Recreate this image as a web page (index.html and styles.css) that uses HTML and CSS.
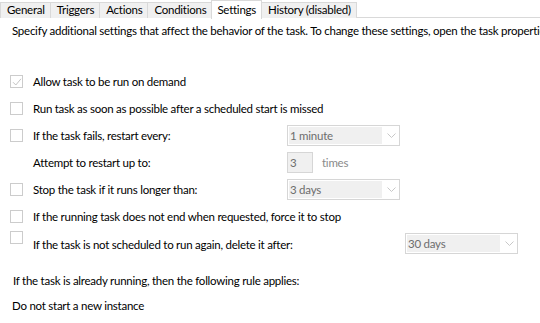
FILE: index.html
```html
<!DOCTYPE html>
<html>
<head>
<title>Task Settings</title>
<link rel="stylesheet" href="styles.css">
</head>
<body>

<div class="tabs">
  <div class="tab">General</div>
  <div class="tab">Triggers</div>
  <div class="tab">Actions</div>
  <div class="tab">Conditions</div>
  <div class="tab active">Settings</div>
  <div class="tab">History (disabled)</div>
</div>

<p class="desc">Specify additional settings that affect the behavior of the task. To change these settings, open the task properties dialog.</p>

<div class="settings">
  <div class="row">
    <span class="check checked">
      <svg width="10" height="10" viewBox="0 0 10 10"><path d="M1 5.2 L3.8 8 L9 1.8" fill="none" stroke="#c4c4c4" stroke-width="1"/></svg>
    </span>
    <span class="label">Allow task to be run on demand</span>
  </div>
  <div class="row">
    <span class="check"></span>
    <span class="label">Run task as soon as possible after a scheduled start is missed</span>
  </div>
  <div class="row">
    <span class="check"></span>
    <span class="label fixed">If the task fails, restart every:</span>
    <div class="combo"><span class="value">1 minute</span><span class="arrow"><svg width="9" height="5" viewBox="0 0 9 5"><path d="M0.5 0.5 L4.5 4.5 L8.5 0.5" fill="none" stroke="#c8c8c8"/></svg></span></div>
  </div>
  <div class="row">
    <span class="check blank"></span>
    <span class="label fixed">Attempt to restart up to:</span>
    <div class="number">3</div>
    <span class="unit">times</span>
  </div>
  <div class="row">
    <span class="check"></span>
    <span class="label fixed">Stop the task if it runs longer than:</span>
    <div class="combo"><span class="value">3 days</span><span class="arrow"><svg width="9" height="5" viewBox="0 0 9 5"><path d="M0.5 0.5 L4.5 4.5 L8.5 0.5" fill="none" stroke="#c8c8c8"/></svg></span></div>
  </div>
  <div class="row">
    <span class="check"></span>
    <span class="label">If the running task does not end when requested, force it to stop</span>
  </div>
  <div class="row last">
    <span class="check"></span>
    <span class="label wide">If the task is not scheduled to run again, delete it after:</span>
    <div class="combo"><span class="value">30 days</span><span class="arrow"><svg width="9" height="5" viewBox="0 0 9 5"><path d="M0.5 0.5 L4.5 4.5 L8.5 0.5" fill="none" stroke="#c8c8c8"/></svg></span></div>
  </div>
</div>

<p class="rule">If the task is already running, then the following rule applies:</p>
<p class="instance">Do not start a new instance</p>

</body>
</html>
```

FILE: styles.css
```css
body {
  margin: 0;
  width: 540px;
  height: 323px;
  overflow: hidden;
  background-color: #ffffff;
  color: #000000;
  font-family: Lato, 'Open Sans', sans-serif;
  font-size: 11.5px;
  letter-spacing: -0.25px;
}

.tabs {
  display: flex;
  height: 17px;
  border-bottom: 1px solid #d9d9d9;
  white-space: nowrap;
}

.tab {
  height: 15px;
  margin-top: 2px;
  padding: 0 5px 0 6px;
  line-height: 14px;
  background-color: #f0f0f0;
  border: 1px solid #d9d9d9;
  border-bottom: none;
  margin-right: -1px;
}

.tab.active {
  height: 18px;
  margin-top: 0;
  padding: 0 5px;
  line-height: 17px;
  background-color: #ffffff;
  position: relative;
  z-index: 1;
}

.desc {
  margin: 4px 0 0 12px;
  line-height: 17px;
  white-space: nowrap;
}

.settings {
  margin-top: 29px;
}

.row {
  display: flex;
  align-items: center;
  height: 27px;
  padding-left: 10px;
}

.check {
  display: flex;
  align-items: center;
  justify-content: center;
  width: 11px;
  height: 11px;
  border: 1px solid #cccccc;
  margin-right: 10px;
  flex-shrink: 0;
}

.check.blank {
  border-color: transparent;
}

.label {
  white-space: nowrap;
}

.label.fixed {
  width: 254px;
}

.label.wide {
  width: 372px;
}

.row.last .check {
  align-self: flex-start;
  margin-top: 1px;
}

.row.last .label {
  padding-top: 2px;
}

.combo {
  display: flex;
  width: 111px;
  height: 19px;
  border: 1px solid #d6d6d6;
  background-color: #ffffff;
  color: #6d6d6d;
}

.combo .value {
  width: 92px;
  margin: 1px;
  padding-left: 1px;
  line-height: 17px;
  background-color: #f0f0f0;
}

.combo .arrow {
  flex: 1;
  display: flex;
  align-items: center;
  justify-content: center;
}

.number {
  width: 22px;
  height: 19px;
  padding-left: 2px;
  border: 1px solid #d6d6d6;
  background-color: #f0f0f0;
  color: #6d6d6d;
  line-height: 19px;
}

.unit {
  margin-left: 9px;
  color: #8a8a8a;
}

.rule {
  margin: 15px 0 0 13px;
  line-height: 18px;
}

.instance {
  margin: 7px 0 0 12px;
  line-height: 18px;
}
```
